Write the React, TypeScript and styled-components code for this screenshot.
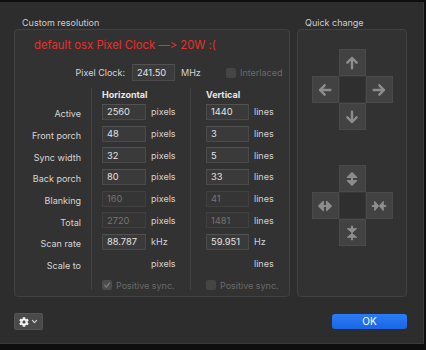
import React from "react";
import styled, { createGlobalStyle } from "styled-components";
import { FaCog } from "react-icons/fa";

const Global = createGlobalStyle`
  html, body { margin: 0; padding: 0; background: #0e0e0e; width: 426px; height: 350px; overflow: hidden; }
  body {
    font-family: Inter, "Liberation Sans", sans-serif;
    -webkit-font-smoothing: antialiased;
    font-variant-ligatures: none;
    font-feature-settings: "calt" 0, "liga" 0;
  }
  * { box-sizing: border-box; }
`;

const Window = styled.div`
  width: 424px;
  height: 342px;
  margin-top: 2px;
  background: #2d2d2d;
  border-right: 1px solid #3b3b3b;
  border-bottom: 1px solid #3a3a3a;
  padding: 15px 16px 0 14px;
  display: flex;
  flex-direction: column;
`;

const Top = styled.div`
  display: flex;
  gap: 7px;
`;

const Section = styled.div<{ $w: number }>`
  width: ${(p) => p.$w}px;
  display: flex;
  flex-direction: column;
`;

const Title = styled.div`
  height: 12px;
  line-height: 12px;
  font-size: 9px;
  color: #cdcdcd;
  padding-left: 8px;
`;

const Box = styled.div`
  height: 268px;
  border: 1px solid #414141;
  border-radius: 4px;
  background: #323232;
`;

const LeftBox = styled(Box)`
  padding-top: 7px;
  display: flex;
  flex-direction: column;
`;

const Warning = styled.div`
  padding-left: 19px;
  font-size: 11.3px;
  line-height: 16px;
  height: 16px;
  color: #e8302c;
  white-space: nowrap;
  font-feature-settings: "calt" 0;
`;

const ClockRow = styled.div`
  margin-top: 11px;
  height: 17px;
  display: flex;
  align-items: center;
`;

const ClockLabel = styled.span`
  width: 110px;
  text-align: right;
  font-size: 9px;
  color: #d6d6d6;
  margin-right: 7px;
`;

const Unit = styled.span<{ $w?: number }>`
  font-size: 9px;
  color: #d2d2d2;
  ${(p) => (p.$w ? `width: ${p.$w}px;` : "")}
`;

const Field = styled.input<{ $w: number; $h?: number; $off?: boolean }>`
  appearance: none;
  width: ${(p) => p.$w}px;
  height: ${(p) => p.$h ?? 16}px;
  margin: 0;
  padding: 0 0 0 4px;
  border: 1px solid ${(p) => (p.$off ? "#404040" : "#4a4a4a")};
  border-top-color: ${(p) => (p.$off ? "#434343" : "#525252")};
  background: ${(p) => (p.$off ? "#353535" : "#3a3a3a")};
  color: ${(p) => (p.$off ? "#747474" : "#e2e2e2")};
  font-family: Inter, "Liberation Sans", sans-serif;
  font-size: 9.3px;
  outline: none;
  border-radius: 0;
`;

const Check = styled.span<{ $on?: boolean }>`
  width: 10px;
  height: 10px;
  border-radius: 2px;
  background: ${(p) => (p.$on ? "#4b4b4b" : "#454545")};
  display: inline-flex;
  align-items: center;
  justify-content: center;
  flex-shrink: 0;
`;

const CheckLabel = styled.span`
  font-size: 9px;
  color: #6a6a6a;
  margin-left: 4px;
  white-space: nowrap;
`;

const Interlace = styled.span`
  display: flex;
  align-items: center;
`;

const Columns = styled.div`
  margin-top: 7px;
  height: 202px;
  display: flex;
`;

const Col = styled.div<{ $w: number; $pl: number; $div?: boolean; $right?: boolean }>`
  width: ${(p) => p.$w}px;
  padding-left: ${(p) => p.$pl}px;
  padding-right: ${(p) => (p.$right ? 10 : 0)}px;
  border-left: ${(p) => (p.$div ? "1px solid #444444" : "none")};
  display: flex;
  flex-direction: column;
  align-items: ${(p) => (p.$right ? "flex-end" : "flex-start")};
`;

const Header = styled.div`
  height: 15px;
  line-height: 13px;
  font-size: 9px;
  font-weight: 700;
  color: #e6e6e6;
`;

const Row = styled.div`
  height: 21.7px;
  display: flex;
  align-items: center;
  gap: 5px;
  flex-shrink: 0;
`;

const RowLabel = styled.span`
  font-size: 9px;
  color: #d6d6d6;
  white-space: nowrap;
`;

const Spacer = styled.span<{ $w: number }>`
  width: ${(p) => p.$w}px;
`;

const RightBox = styled(Box)`
  padding-top: 19px;
  display: flex;
  flex-direction: column;
  align-items: center;
  gap: 35px;
`;

const Pad = styled.div`
  display: grid;
  grid-template-columns: repeat(3, 27px);
  grid-template-rows: repeat(3, 27px);
`;

const Cell = styled.div<{ $c: string; $center?: boolean }>`
  grid-area: ${(p) => p.$c};
  background: ${(p) => (p.$center ? "#2f2f2f" : "#424242")};
  border: 1px solid ${(p) => (p.$center ? "#383838" : "#4a4a4a")};
  display: flex;
  align-items: center;
  justify-content: center;
  color: #8d8d8d;
`;

const Bottom = styled.div`
  margin-top: 16px;
  display: flex;
  justify-content: space-between;
  align-items: flex-start;
`;

const GearButton = styled.div`
  width: 29px;
  height: 17px;
  background: #4a4a4a;
  border: 1px solid #555555;
  border-radius: 2px;
  display: flex;
  align-items: center;
  justify-content: center;
  gap: 2px;
  color: #f0f0f0;
`;

const OkButton = styled.div`
  margin-top: 1px;
  width: 75px;
  height: 15px;
  border-radius: 3px;
  background: linear-gradient(#2c7cf6, #1a66e6);
  color: #ffffff;
  font-size: 10px;
  line-height: 15px;
  text-align: center;
`;

const Arrow = ({ rot }: { rot: number }) => (
  <svg width="16" height="16" viewBox="0 0 24 24" style={{ transform: `rotate(${rot}deg)` }}>
    <path d="M12 20 V4.5 M5 11.5 L12 4.5 L19 11.5" fill="none" stroke="currentColor" strokeWidth="3.6" strokeLinecap="round" strokeLinejoin="round" />
  </svg>
);

const Expand = ({ rot }: { rot: number }) => (
  <svg width="16" height="16" viewBox="0 0 24 24" style={{ transform: `rotate(${rot}deg)` }}>
    <path d="M12 6 V18" stroke="currentColor" strokeWidth="3.2" />
    <path d="M5 9.5 L12 2.5 L19 9.5 Z M5 14.5 L12 21.5 L19 14.5 Z" fill="currentColor" stroke="currentColor" strokeWidth="1.8" strokeLinejoin="round" />
  </svg>
);

const Compress = ({ rot }: { rot: number }) => (
  <svg width="16" height="16" viewBox="0 0 24 24" style={{ transform: `rotate(${rot}deg)` }}>
    <path d="M2.5 12 H8 M16 12 H21.5" stroke="currentColor" strokeWidth="3.2" strokeLinecap="round" />
    <path d="M5.5 5 L11.5 12 L5.5 19 Z M18.5 5 L12.5 12 L18.5 19 Z" fill="currentColor" stroke="currentColor" strokeWidth="1.4" strokeLinejoin="round" />
  </svg>
);

const Tick = () => (
  <svg width="8" height="8" viewBox="0 0 10 10">
    <path d="M2 5.2 L4.2 7.5 L8.2 2.5" fill="none" stroke="#7a7a7a" strokeWidth="1.6" strokeLinecap="round" strokeLinejoin="round" />
  </svg>
);

const Chevron = () => (
  <svg width="7" height="7" viewBox="0 0 10 10">
    <path d="M2 3.5 L5 6.5 L8 3.5" fill="none" stroke="#d8d8d8" strokeWidth="1.6" strokeLinecap="round" strokeLinejoin="round" />
  </svg>
);

type R = { label: string; h?: string; v?: string; hu: string; vu: string; off?: boolean };

const rows: R[] = [
  { label: "Active", h: "2560", v: "1440", hu: "pixels", vu: "lines" },
  { label: "Front porch", h: "48", v: "3", hu: "pixels", vu: "lines" },
  { label: "Sync width", h: "32", v: "5", hu: "pixels", vu: "lines" },
  { label: "Back porch", h: "80", v: "33", hu: "pixels", vu: "lines" },
  { label: "Blanking", h: "160", v: "41", hu: "pixels", vu: "lines", off: true },
  { label: "Total", h: "2720", v: "1481", hu: "pixels", vu: "lines", off: true },
  { label: "Scan rate", h: "88.787", v: "59.951", hu: "kHz", vu: "Hz" },
  { label: "Scale to", hu: "pixels", vu: "lines" },
];

export default function App() {
  return (
    <>
      <Global />
      <Window>
        <Top>
          <Section $w={276}>
            <Title>Custom resolution</Title>
            <LeftBox>
              <Warning>default osx Pixel Clock —&gt; 20W :(</Warning>
              <ClockRow>
                <ClockLabel>Pixel Clock:</ClockLabel>
                <Field $w={43} $h={17} readOnly value="241.50" />
                <Unit $w={45} style={{ marginLeft: 6 }}>MHz</Unit>
                <Interlace>
                  <Check />
                  <CheckLabel>Interlaced</CheckLabel>
                </Interlace>
              </ClockRow>
              <Columns>
                <Col $w={76} $pl={0} $right>
                  <Header />
                  {rows.map((r) => (
                    <Row key={r.label}>
                      <RowLabel>{r.label}</RowLabel>
                    </Row>
                  ))}
                </Col>
                <Col $w={99} $pl={10} $div>
                  <Header>Horizontal</Header>
                  {rows.map((r) => (
                    <Row key={r.label}>
                      {r.h ? <Field $w={44} $off={r.off} readOnly value={r.h} /> : <Spacer $w={44} />}
                      <Unit>{r.hu}</Unit>
                    </Row>
                  ))}
                  <Row style={{ gap: 0 }}>
                    <Check $on>
                      <Tick />
                    </Check>
                    <CheckLabel>Positive sync.</CheckLabel>
                  </Row>
                </Col>
                <Col $w={99} $pl={15} $div>
                  <Header>Vertical</Header>
                  {rows.map((r) => (
                    <Row key={r.label}>
                      {r.v ? <Field $w={43} $off={r.off} readOnly value={r.v} /> : <Spacer $w={43} />}
                      <Unit>{r.vu}</Unit>
                    </Row>
                  ))}
                  <Row style={{ gap: 0 }}>
                    <Check />
                    <CheckLabel>Positive sync.</CheckLabel>
                  </Row>
                </Col>
              </Columns>
            </LeftBox>
          </Section>
          <Section $w={111}>
            <Title>Quick change</Title>
            <RightBox>
              <Pad>
                <Cell $c="1 / 2 / 2 / 3"><Arrow rot={0} /></Cell>
                <Cell $c="2 / 1 / 3 / 2"><Arrow rot={-90} /></Cell>
                <Cell $c="2 / 2 / 3 / 3" $center />
                <Cell $c="2 / 3 / 3 / 4"><Arrow rot={90} /></Cell>
                <Cell $c="3 / 2 / 4 / 3"><Arrow rot={180} /></Cell>
              </Pad>
              <Pad>
                <Cell $c="1 / 2 / 2 / 3"><Expand rot={0} /></Cell>
                <Cell $c="2 / 1 / 3 / 2"><Expand rot={90} /></Cell>
                <Cell $c="2 / 2 / 3 / 3" $center />
                <Cell $c="2 / 3 / 3 / 4"><Compress rot={0} /></Cell>
                <Cell $c="3 / 2 / 4 / 3"><Compress rot={90} /></Cell>
              </Pad>
            </RightBox>
          </Section>
        </Top>
        <Bottom>
          <GearButton>
            <FaCog size={10} />
            <Chevron />
          </GearButton>
          <OkButton>OK</OkButton>
        </Bottom>
      </Window>
    </>
  );
}
